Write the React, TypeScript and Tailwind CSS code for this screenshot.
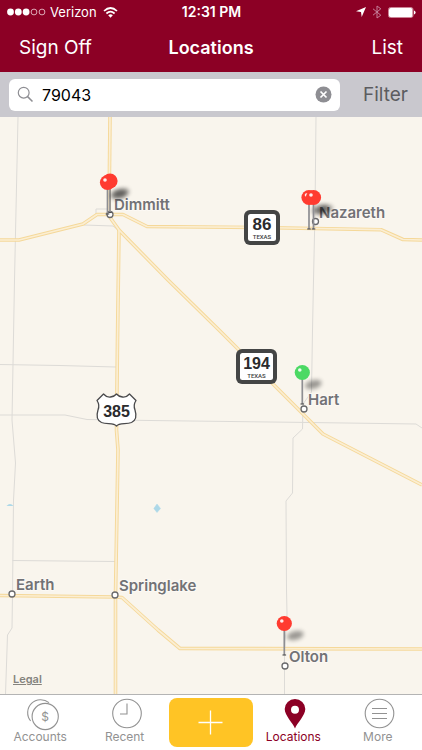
import type { ReactNode } from "react";

const GREY_ROADS = [
  "M18 117 L14.5 280 L12 420 L15.5 463 L13.5 500 L12.5 594 L12 628 L7.5 635 L5.5 694",
  "M0 364.5 L60 365.5 L116 367",
  "M0 415 L65 415 L87 419.5 L150 420.5 L310 422.5 L416 424 L422 428",
  "M12.5 560.5 L115 561.5",
  "M316 117 L315 212 L313.5 280 L312.5 330 L311.5 392 L303 404 L302.5 429 L293 438 L292.5 493 L286 501 L286.5 590 L287 614 L284.5 650 L284.5 694",
  "M96 214 L96 209 L107 209",
  "M84 225 L113 226 L118 230",
];

const HIGHWAYS = [
  "M110 117 L109 215",
  "M0 240 L19 240 L83 224 L97 214.5 L123 214.5 L147 226.5 L260 227.5 L381 229.7 L403 239.5 L422 240",
  "M109 216 L119 230 L168 280 L219 330 L274 385 L323 434 L422 485",
  "M119 230 L117.5 340 L116.5 430 L118 450 L115.5 595 L115.5 694",
  "M0 595.5 L115 597 L122 597.5 L158 630 L180 648.5 L422 649",
];

const TOWNS = [
  { name: "Dimmitt", x: 110, y: 214.5, lx: 114, ly: 210 },
  { name: "Nazareth", x: 315.5, y: 221.5, lx: 319, ly: 217.5 },
  { name: "Hart", x: 304, y: 409, lx: 308, ly: 405 },
  { name: "Earth", x: 12, y: 594, lx: 16, ly: 589.5 },
  { name: "Springlake", x: 115, y: 595, lx: 119, ly: 591 },
  { name: "Olton", x: 285, y: 666, lx: 289, ly: 661.5 },
];

const PINS = [
  { x: 110, y: 181, color: "#ff3b30" },
  { x: 107.5, y: 182.5, color: "#ff3b30" },
  { x: 309, y: 197.5, color: "#ff3b30" },
  { x: 313.5, y: 197.5, color: "#ff3b30" },
  { x: 302.3, y: 372.5, color: "#4cd964" },
  { x: 284.3, y: 623.5, color: "#ff3b30" },
];

function TexasShield({ x, y, width, height, number, size }: {
  x: number; y: number; width: number; height: number; number: string; size: number;
}) {
  const cx = x + width / 2;
  return (
    <g>
      <rect x={x} y={y} width={width} height={height} rx="6" fill="#444545" />
      <rect x={x + 4} y={y + 4} width={width - 8} height={height - 8} rx="2.5" fill="#fff" />
      <text x={cx} y={y + 20} textAnchor="middle" fontFamily="Liberation Sans, Arial, sans-serif" fontWeight="700" fontSize={size} fill="#2b2b2d">{number}</text>
      <text x={cx} y={y + 29} textAnchor="middle" fontFamily="Roboto, sans-serif" fontWeight="500" fontSize="6" fill="#3c3c3e">TEXAS</text>
    </g>
  );
}

function LocationMap() {
  return (
    <svg viewBox="0 117 422 577" preserveAspectRatio="xMidYMid slice" className="absolute inset-0 h-full w-full" role="img" aria-label="Map of locations">
      <defs>
        <filter id="pin-shadow" x="-50%" y="-100%" width="200%" height="300%">
          <feGaussianBlur stdDeviation="2.2" />
        </filter>
      </defs>
      <g fill="none" stroke="#dddbd7" strokeWidth="1">
        {GREY_ROADS.map((d) => <path key={d} d={d} />)}
      </g>
      <g fill="none" stroke="#f5d899" strokeWidth="3.6" strokeLinejoin="round">
        {HIGHWAYS.map((d) => <path key={d} d={d} />)}
      </g>
      <g fill="none" stroke="#fbeed3" strokeWidth="1.7" strokeLinejoin="round">
        {HIGHWAYS.map((d) => <path key={d} d={d} />)}
      </g>
      <path d="M157 504 L160.5 508.5 L157 512.5 L153.8 508.5 Z" fill="#add8e8" stroke="#add8e8" strokeWidth="0.5" />
      <path d="M6.5 506 Q10 502 13.5 506 Z" fill="#add8e8" />

      <TexasShield x={244} y={210} width={36} height={35} number="86" size={17} />
      <TexasShield x={236} y={349} width={41} height={35} number="194" size={16} />
      <path
        d="M103.5 394 Q106.5 397.5 110.5 397 Q114.5 396.5 116.5 394 Q118.5 396.5 122.5 397 Q126.5 397.5 129.5 394 L136 400.5 Q133 405 135 410 Q138 419.5 131.5 422.5 C126 424.5 119 422.5 116.5 426 C114 422.5 107 424.5 101.5 422.5 Q95 419.5 98 410 Q100 405 97 400.5 Z"
        fill="#fff" stroke="#4a4a4c" strokeWidth="1.3" strokeLinejoin="round"
      />
      <text x="116.5" y="416.5" textAnchor="middle" fontFamily="Liberation Sans, Arial, sans-serif" fontWeight="700" fontSize="16" fill="#2b2b2d">385</text>

      {TOWNS.map((t) => (
        <g key={t.name}>
          <circle cx={t.x} cy={t.y} r="3" fill="#fff" stroke="#69696b" strokeWidth="1.3" />
          <text x={t.lx} y={t.ly} fontFamily="Inter, sans-serif" fontSize="15" fontWeight="600" fill="#727276" stroke="#fcf9f4" strokeWidth="2" strokeLinejoin="round" paintOrder="stroke">{t.name}</text>
        </g>
      ))}

      {PINS.map((p) => (
        <g key={`${p.x}-${p.y}`}>
          <ellipse cx={p.x + 11} cy={p.y + 12} rx="8.5" ry="4.2" fill="#000" opacity="0.38" filter="url(#pin-shadow)" transform={`rotate(-14 ${p.x + 11} ${p.y + 12})`} />
          <path d={`M${p.x} ${p.y + 6} V${p.y + 31.5}`} stroke="#8e8e92" strokeWidth="1.7" />
          <path d={`M${p.x - 1.8} ${p.y + 31.5} h3.6`} stroke="#4c4c4e" strokeWidth="1.1" />
        </g>
      ))}
      {PINS.map((p) => (
        <g key={`${p.x}-${p.y}`}>
          <circle cx={p.x} cy={p.y} r="7.6" fill={p.color} />
          <circle cx={p.x - 2.5} cy={p.y - 2.5} r="1.8" fill="#fff" opacity="0.9" />
        </g>
      ))}
    </svg>
  );
}

function Tab({ label, active = false, children }: { label: string; active?: boolean; children: ReactNode }) {
  return (
    <button type="button" className={`flex flex-col items-center pt-0.5 pr-1 text-xs leading-3 ${active ? "text-[#8c0025]" : "text-[#929292]"}`}>
      <svg width="38" height="34" viewBox="0 0 38 34" fill="none" stroke="currentColor" strokeWidth="1.1" aria-hidden="true">
        {children}
      </svg>
      {label}
    </button>
  );
}

export default function App() {
  return (
    <div className="flex h-screen min-h-[480px] flex-col bg-white font-['Inter',sans-serif]">
      <header className="bg-[#8c0025] text-white">
        <div className="grid h-6 grid-cols-3 items-center pr-1.5 pl-[7px] text-[13px] leading-4">
          <div className="flex items-center gap-1">
            <svg width="39" height="8" viewBox="0 0 39 8" aria-label="Signal strength">
              {[3.5, 11.3, 19.1].map((cx) => <circle key={cx} cx={cx} cy="4" r="3.4" fill="#fff" />)}
              {[27, 35].map((cx) => <circle key={cx} cx={cx} cy="4" r="2.9" fill="none" stroke="#e5bcc6" strokeWidth="0.9" />)}
            </svg>
            <span>Verizon</span>
            <svg className="ml-0.5" width="15" height="11" viewBox="0 0 15 11" fill="none" stroke="#fff" strokeWidth="1.7" aria-label="Wi-Fi">
              <path d="M1 4 Q7.5 -2 14 4" />
              <path d="M3.4 6.5 Q7.5 2.8 11.6 6.5" />
              <path d="M7.5 10.7 L5.2 8.3 Q7.5 6.4 9.8 8.3 Z" fill="#fff" stroke="none" />
            </svg>
          </div>
          <div className="text-center text-sm leading-4 font-semibold">12:31 PM</div>
          <div className="flex items-center justify-end gap-1.5">
            <svg width="10" height="10" viewBox="0 0 10 10" fill="#fff" aria-label="Location services">
              <path d="M10 0 L5.7 10 L5 5 L0 4.3 Z" />
            </svg>
            <svg width="10" height="14" viewBox="0 0 10 14" fill="none" stroke="#c5809a" strokeWidth="1" aria-label="Bluetooth">
              <path d="M1 3.8 L8.8 10.2 L5 13 V1 L8.8 3.8 L1 10.2" />
            </svg>
            <svg width="28" height="11" viewBox="0 0 28 11" aria-label="Battery">
              <rect x="0.5" y="0.5" width="24.5" height="10" rx="2" fill="none" stroke="#dda5b3" strokeWidth="0.8" />
              <rect x="1" y="1" width="23.5" height="9" rx="1.5" fill="#fff" />
              <path d="M26 3.5 Q27.6 4 27.6 5.5 Q27.6 7 26 7.5 Z" fill="#fff" />
            </svg>
          </div>
        </div>
        <nav className="grid h-12 grid-cols-3 items-center px-[19px] text-[19px] leading-6">
          <button type="button" className="justify-self-start">Sign Off</button>
          <h1 className="text-center text-lg leading-6 font-semibold">Locations</h1>
          <button type="button" className="justify-self-end">List</button>
        </nav>
      </header>

      <form className="flex h-[45px] items-center bg-[#c9c8ce] pr-3.5 pl-[9px]" onSubmit={(e) => e.preventDefault()}>
        <div className="flex h-8 min-w-0 flex-1 items-center rounded-md bg-white px-2">
          <svg width="17" height="17" viewBox="0 0 17 17" fill="none" stroke="#8e8e93" strokeWidth="1.2" aria-hidden="true">
            <circle cx="6.7" cy="6.7" r="5.4" />
            <path d="M10.6 10.6 L15.5 15.5" strokeWidth="1.5" />
          </svg>
          <input type="text" aria-label="Search locations" defaultValue="79043" className="ml-2 min-w-0 flex-1 bg-transparent text-base text-black outline-none" />
          <button type="button" aria-label="Clear search">
            <svg width="17" height="17" viewBox="0 0 17 17" aria-hidden="true">
              <circle cx="8.5" cy="8.5" r="8" fill="#8e8e93" />
              <path d="M5.5 5.5 L11.5 11.5 M11.5 5.5 L5.5 11.5" stroke="#fff" strokeWidth="1.7" />
            </svg>
          </button>
        </div>
        <button type="button" className="ml-[23px] text-[19px] leading-6 text-[#5c5c60]">Filter</button>
      </form>

      <main className="relative min-h-0 flex-1 overflow-hidden bg-[#f9f5ed]">
        <LocationMap />
        <a href="#legal" className="absolute bottom-[7px] left-[13px] text-[11px] leading-4 font-semibold text-[#85837d] underline">Legal</a>
      </main>

      <nav className="grid h-14 grid-cols-5 border-t border-[#b4b4b4] bg-white">
        <Tab label="Accounts">
          <path d="M9.6 23.9 A13 13 0 0 1 28 5.7" />
          <circle cx="24.2" cy="19.5" r="13.1" />
          <text x="24.2" y="24" textAnchor="middle" fontSize="12" fill="currentColor" stroke="none">$</text>
        </Tab>
        <Tab label="Recent">
          <circle cx="21" cy="16.5" r="14.3" />
          <path d="M21 6.5 V17 H14" />
        </Tab>
        <button type="button" aria-label="Add" className="my-[3px] flex items-center justify-center rounded-lg bg-[#ffc425]">
          <svg width="25" height="25" viewBox="0 0 25 25" stroke="#fff" strokeWidth="1.3" aria-hidden="true">
            <path d="M12.5 0.5 V24.5 M0.5 12.5 H24.5" />
          </svg>
        </button>
        <Tab label="Locations" active>
          <path d="M21 31.5 C19 26 10.7 18.5 10.7 12 A10.3 10 0 0 1 31.3 12 C31.3 18.5 23 26 21 31.5 Z M21 8.8 A4 4 0 1 0 21 16.8 A4 4 0 1 0 21 8.8 Z" fill="currentColor" fillRule="evenodd" stroke="none" />
        </Tab>
        <Tab label="More">
          <circle cx="20.5" cy="16.5" r="14.3" />
          <path d="M13 11.5 H28 M13 16.5 H28 M13 21.5 H28" />
        </Tab>
      </nav>
    </div>
  );
}
